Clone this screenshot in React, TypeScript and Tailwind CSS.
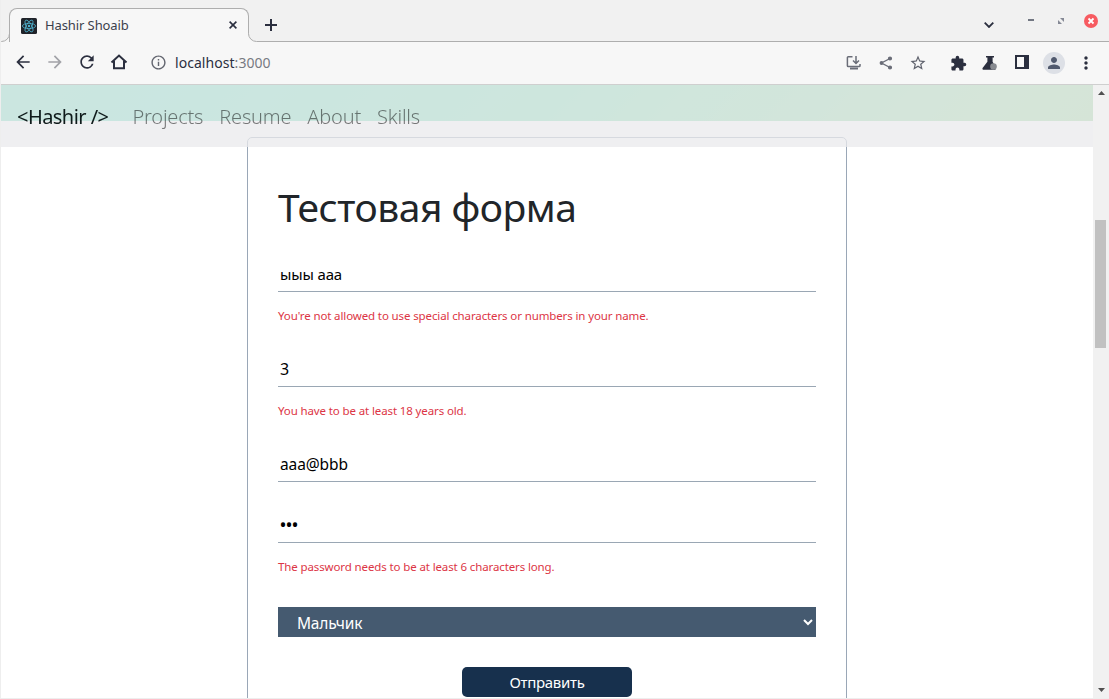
import type { ReactNode } from 'react'
import {
  MdArrowBack,
  MdArrowForward,
  MdExtension,
  MdInfoOutline,
  MdMoreVert,
  MdPerson,
  MdRefresh,
  MdStarBorder,
} from 'react-icons/md'

interface FieldProps {
  type: string
  value: string
  error?: string
  className?: string
  inputClassName?: string
}

const links = ['Projects', 'Resume', 'About', 'Skills']

function ReactLogo() {
  return (
    <svg width="16" height="16" viewBox="0 0 16 16" fill="none" stroke="#4fb3cf" strokeWidth="0.8">
      <rect width="16" height="16" rx="1.5" fill="#20232a" stroke="none" />
      <ellipse cx="8" cy="8" rx="6.6" ry="2.6" />
      <ellipse cx="8" cy="8" rx="6.6" ry="2.6" transform="rotate(60 8 8)" />
      <ellipse cx="8" cy="8" rx="6.6" ry="2.6" transform="rotate(120 8 8)" />
      <circle cx="8" cy="8" r="1.2" fill="#4fb3cf" stroke="none" />
    </svg>
  )
}

function TabStrip() {
  return (
    <div className="flex h-[42px] items-end bg-[#f1f1f1]">
      <svg width="9" height="12" viewBox="0 0 9 12" fill="none">
        <path d="M0 11.5h.5a8 8 0 0 0 8-8V0H9v12H0z" fill="#f7f7f7" />
        <path d="M0 11.5h.5a8 8 0 0 0 8-8V0" stroke="#aeaeae" />
      </svg>
      <div className="-ml-px flex h-[34px] w-[240px] items-center rounded-t-lg border-x border-t border-[#aeaeae] bg-[#f7f7f7] pl-[11px] pr-[11px]">
        <ReactLogo />
        <span className="ml-2 flex-1 text-[13px] tracking-[-0.1px] text-[#3b3f4c]">Hashir Shoaib</span>
        <svg width="8" height="8" viewBox="0 0 8 8" stroke="#2b2f3f" strokeWidth="1.6" className="mb-px">
          <path d="m.6.6 6.8 6.8m0-6.8L.6 7.4" />
        </svg>
      </div>
      <svg width="10" height="12" viewBox="0 0 10 12" fill="none" className="-ml-px">
        <path d="M0 0h.5v3.5a8 8 0 0 0 8 8H10v.5H0z" fill="#f7f7f7" />
        <path d="M.5 0v3.5a8 8 0 0 0 8 8H10" stroke="#aeaeae" />
      </svg>
      <div className="flex h-[42px] flex-1 items-center border-b border-[#aeaeae] pl-[7px] pr-[11px] pt-[7px]">
        <svg width="12" height="12" viewBox="0 0 12 12" stroke="#2b2f3f" strokeWidth="2" className="mt-px">
          <path d="M6 0v12M0 6h12" />
        </svg>
        <svg width="10" height="6" viewBox="0 0 10 6" fill="none" stroke="#2b2f3f" strokeWidth="1.8" className="ml-auto mt-px">
          <path d="M.7.7 5 5 9.3.7" />
        </svg>
        <div className="mb-[8px] ml-[34px] h-[2px] w-[6px] bg-[#727782]" />
        <svg width="6" height="6" viewBox="0 0 6 6" fill="#858995" className="mb-[7px] ml-[24px]">
          <path d="M2 0h4v4zM0 2l4 4H0z" />
        </svg>
        <svg width="14" height="14" viewBox="0 0 14 14" className="mb-[7px] ml-[20px]">
          <circle cx="7" cy="7" r="7" fill="#f75b61" />
          <path d="m4.5 4.5 5 5m0-5-5 5" stroke="#fff" strokeWidth="1.8" />
        </svg>
      </div>
    </div>
  )
}

function Toolbar() {
  return (
    <div className="flex h-[43px] items-center border-b border-[#cfcfcf] bg-[#f7f7f7] pb-[2px] pl-[12px] pr-[13px] text-[#2b2f3f]">
      <div className="flex items-center gap-[12px]">
        <MdArrowBack size={20} />
        <MdArrowForward size={20} color="#a2a3a8" />
        <MdRefresh size={20} />
        <svg width="20" height="20" viewBox="0 0 20 20" fill="none" stroke="currentColor" strokeWidth="2">
          <path d="M2.5 10.5 10 3.5l7.5 7M5 9v7.2h10V9" />
        </svg>
      </div>
      <MdInfoOutline size={17} color="#62656f" className="ml-[21px] mt-px" />
      <span className="ml-2 mt-[2px] flex-1 text-[14px] leading-5 tracking-[0.05px] text-[#2b2f3f]">
        localhost<span className="text-[#777a82]">:3000</span>
      </span>
      <svg width="16" height="16" viewBox="0 0 16 16" fill="none" stroke="#6a6d78" strokeWidth="1.5" className="mt-[2px]">
        <path d="M6.5 1.7H2.2q-.8 0-.8.8v8.2q0 .8.8.8h11q.8 0 .8-.8V9M10 1v7M7 5.5 10 8.5l3-3" />
        <path d="M4 13.5h8" strokeWidth="2" />
      </svg>
      <svg width="14" height="14" viewBox="0 0 14 14" className="ml-[17px] mt-[2px]" stroke="#6a6d78" fill="#6a6d78" strokeWidth="1.4">
        <path d="M11 2.5 2.5 7l8.5 4.5" fill="none" />
        <circle cx="11" cy="2.5" r="1.4" />
        <circle cx="2.5" cy="7" r="1.2" />
        <circle cx="11" cy="11.5" r="1.4" />
      </svg>
      <MdStarBorder size={18} color="#5f626d" className="ml-[16px] mt-[2px]" />
      <MdExtension size={17} className="ml-[23px] mt-[2px]" />
      <svg width="16" height="16" viewBox="0 0 16 16" className="ml-[15px] mt-px">
        <path d="M4 1h8v1.6h-1.4v4.2L13.5 12v2.7H1q-1-.5-.4-1.6L5.4 6.8V2.6H4z" fill="#2b2f3f" />
        <circle cx="11.5" cy="11.5" r="3.3" fill="#888b91" />
      </svg>
      <svg width="14" height="14" viewBox="0 0 14 14" className="ml-[17px]">
        <path d="M0 0h14v14H0zM2 2v10h7V2z" fill="#2b2f3f" fillRule="evenodd" />
      </svg>
      <div className="ml-[14px] mt-[2px] flex size-[22px] items-center justify-center rounded-full bg-[#dde0e6]">
        <MdPerson size={18} color="#515a6e" />
      </div>
      <MdMoreVert size={20} className="ml-[11px] mt-px" />
    </div>
  )
}

function Navbar() {
  return (
    <nav className="absolute inset-x-0 top-0 z-10 flex h-[62px] items-center bg-[#e9eaec]/75 pl-[16px] pt-[2px] text-[20px] leading-[30px] will-change-transform">
      <a href="#" className="tracking-[-0.55px] text-[#0e1a1a]">&lt;Hashir /&gt;</a>
      <ul className="ml-[24px] flex gap-4 font-light tracking-[-0.2px] text-black/50">
        {links.map((link) => (
          <li key={link}>{link}</li>
        ))}
      </ul>
    </nav>
  )
}

function Field({ type, value, error, className, inputClassName = '' }: FieldProps) {
  return (
    <div className={className}>
      <input
        type={type}
        defaultValue={value}
        className={`block h-[35px] w-full border-b border-[#9aa7b4] px-[2px] text-black outline-none ${inputClassName}`}
      />
      {error && <p className="mt-[15px] text-[11.5px] leading-[18px] tracking-[-0.12px] text-[#dc3545]">{error}</p>}
    </div>
  )
}

function Panel({ children }: { children: ReactNode }) {
  return (
    <div className="mx-auto mt-4 flex h-[640px] w-[600px] flex-col rounded-[5px] border border-[#9aa7b7] bg-white px-[30px] pt-[45px]">
      {children}
    </div>
  )
}

export default function App() {
  return (
    <div className="flex h-[699px] w-[1109px] flex-col overflow-hidden border-b border-l border-[#eeeeee] bg-white font-['Noto_Sans',sans-serif]">
      <TabStrip />
      <Toolbar />
      <div className="flex min-h-0 flex-1">
        <main className="relative flex-1 overflow-hidden">
          <Navbar />
          <div className="h-9 bg-linear-[135deg,#71dcba_0%,#6cdabe_15%,#79dab0_50%,#95d7a2_85%,#99d498_100%]" />
          <Panel>
            <h1 className="text-[39px] leading-[48px] tracking-[-0.5px] text-[#212529]">Тестовая форма</h1>
            <Field type="text" value="ыыы ааа" error="You're not allowed to use special characters or numbers in your name." className="mt-[26px]" inputClassName="text-[15px] tracking-[-0.15px]" />
            <Field type="text" value="3" error="You have to be at least 18 years old." className="mt-[27px]" inputClassName="text-[16px]" />
            <Field type="text" value="aaa@bbb" className="mt-[27px]" inputClassName="text-[15.5px] tracking-[-0.1px]" />
            <Field type="password" value="aaa" error="The password needs to be at least 6 characters long." className="mt-[26px]" inputClassName="text-[16px] font-semibold" />
            <div className="mt-[31px] flex h-[30px] items-center justify-between bg-[#455a70] pl-[19px] pr-[3px] text-[15.5px] tracking-[-0.2px] text-white">
              <span className="mt-[3px]">Мальчик</span>
              <svg width="10" height="7" viewBox="0 0 10 7" fill="none" stroke="#fff" strokeWidth="2">
                <path d="m1 1 4 4 4-4" />
              </svg>
            </div>
            <button className="mx-auto mt-[30px] h-[30px] w-[170px] rounded-[5px] bg-[#17304d] text-[15px] leading-[30px] tracking-[-0.3px] text-white">
              Отправить
            </button>
          </Panel>
        </main>
        <div className="flex w-4 flex-col items-center bg-[#f1f1f1] py-[6px]">
          <svg width="7" height="4" viewBox="0 0 7 4" fill="#505050">
            <path d="M3.5 0 7 4H0z" />
          </svg>
          <div className="mr-px mt-[125px] h-[128px] w-[11px] bg-[#c1c1c1]" />
          <svg width="7" height="4" viewBox="0 0 7 4" fill="#505050" className="mt-auto">
            <path d="M0 0h7L3.5 4z" />
          </svg>
        </div>
      </div>
    </div>
  )
}
